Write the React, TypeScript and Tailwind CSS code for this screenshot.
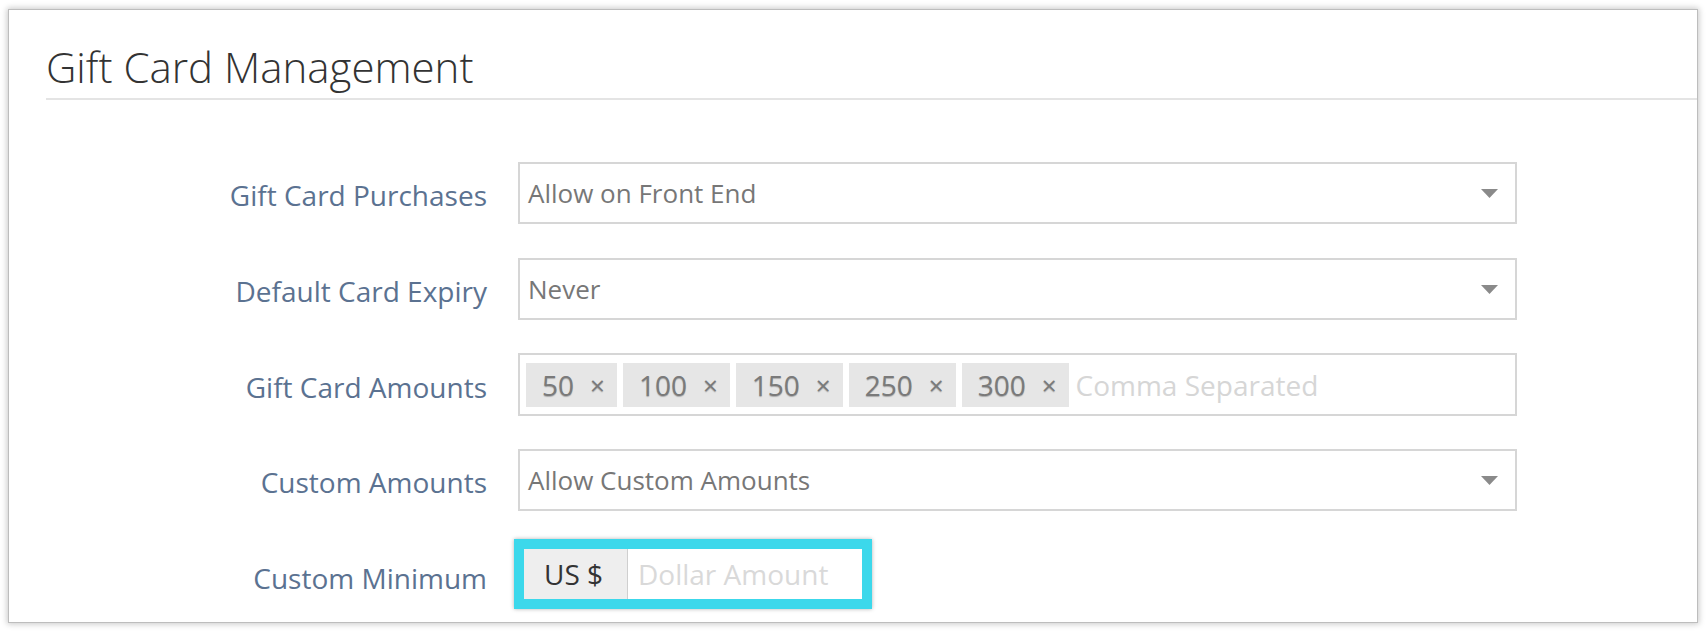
import React from "react";

const font = { fontFamily: '"Open Sans", "Liberation Sans", sans-serif' };

function Caret() {
  return (
    <svg width="17" height="9" viewBox="0 0 17 9" className="shrink-0">
      <polygon points="0,0 17,0 8.5,9" fill="#8a8a8a" />
    </svg>
  );
}

function Label({ children, pt = "pt-[4px]" }: { children: React.ReactNode; pt?: string }) {
  return (
    <div className={`w-[441px] shrink-0 text-right text-[28px] leading-none text-[#5b7291] ${pt}`}>
      {children}
    </div>
  );
}

function Select({ value }: { value: string }) {
  return (
    <div className="flex h-[62px] w-[999px] items-center justify-between border-2 border-[#d6d6d6] bg-white pl-[8px] pr-[17px]">
      <span className="text-[26px] leading-none text-[#777]">{value}</span>
      <Caret />
    </div>
  );
}

function Tag({ v }: { v: string }) {
  return (
    <div className="flex h-[44px] items-center bg-[#e6e6e6] pl-[16px] pr-[12px] text-[28px] leading-none text-[#7a7a7a] [text-shadow:0_1px_1px_rgba(0,0,0,0.25)]">
      <span>{v}</span>
      <span className="ml-[16px] text-[26px]">×</span>
    </div>
  );
}

export default function App() {
  return (
    <div className="h-[632px] w-[1708px] bg-white pl-[8px] pt-[9px]" style={font}>
      <div className="h-[614px] w-[1690px] border border-[#bdbdbd] bg-white shadow-[0_0_6px_1px_rgba(0,0,0,0.22)]">
        <div className="pl-[37px]">
          <h1 className="mt-[36px] text-[42px] font-light leading-none text-[#333]">
            Gift Card Management
          </h1>
          <div className="mt-[10px] h-[2px] bg-[#e4e4e4]" />
        </div>

        <div className="flex flex-col pl-[37px]">
          <div className="mt-[62px] flex items-center gap-[31px]">
            <Label>Gift Card Purchases</Label>
            <Select value="Allow on Front End" />
          </div>
          <div className="mt-[34px] flex items-center gap-[31px]">
            <Label>Default Card Expiry</Label>
            <Select value="Never" />
          </div>
          <div className="mt-[33px] flex items-center gap-[31px]">
            <Label>Gift Card Amounts</Label>
            <div className="flex h-[63px] w-[999px] items-center gap-[6px] border-2 border-[#d6d6d6] bg-white pl-[6px]">
              <Tag v="50" />
              <Tag v="100" />
              <Tag v="150" />
              <Tag v="250" />
              <Tag v="300" />
              <span className="ml-[1px] text-[28px] leading-none text-[#d6d6d6]">Comma Separated</span>
            </div>
          </div>
          <div className="mt-[33px] flex items-center gap-[31px]">
            <Label>Custom Amounts</Label>
            <Select value="Allow Custom Amounts" />
          </div>
          <div className="mt-[28px] flex items-center gap-[27px]">
            <Label pt="pt-[7px]">Custom Minimum</Label>
            <div className="flex h-[70px] w-[358px] border-[10px] border-[#3cd8eb] shadow-[0_0_4px_rgba(0,0,0,0.3)]">
              <div className="flex w-[104px] items-center border-r border-[#cfcfcf] bg-[#eeeeee] pl-[20px] text-[28px] leading-none text-[#333]">
                US $
              </div>
              <div className="flex flex-1 items-center bg-white pl-[10px] text-[28px] leading-none text-[#d9d9d9]">
                Dollar Amount
              </div>
            </div>
          </div>
        </div>
      </div>
    </div>
  );
}
